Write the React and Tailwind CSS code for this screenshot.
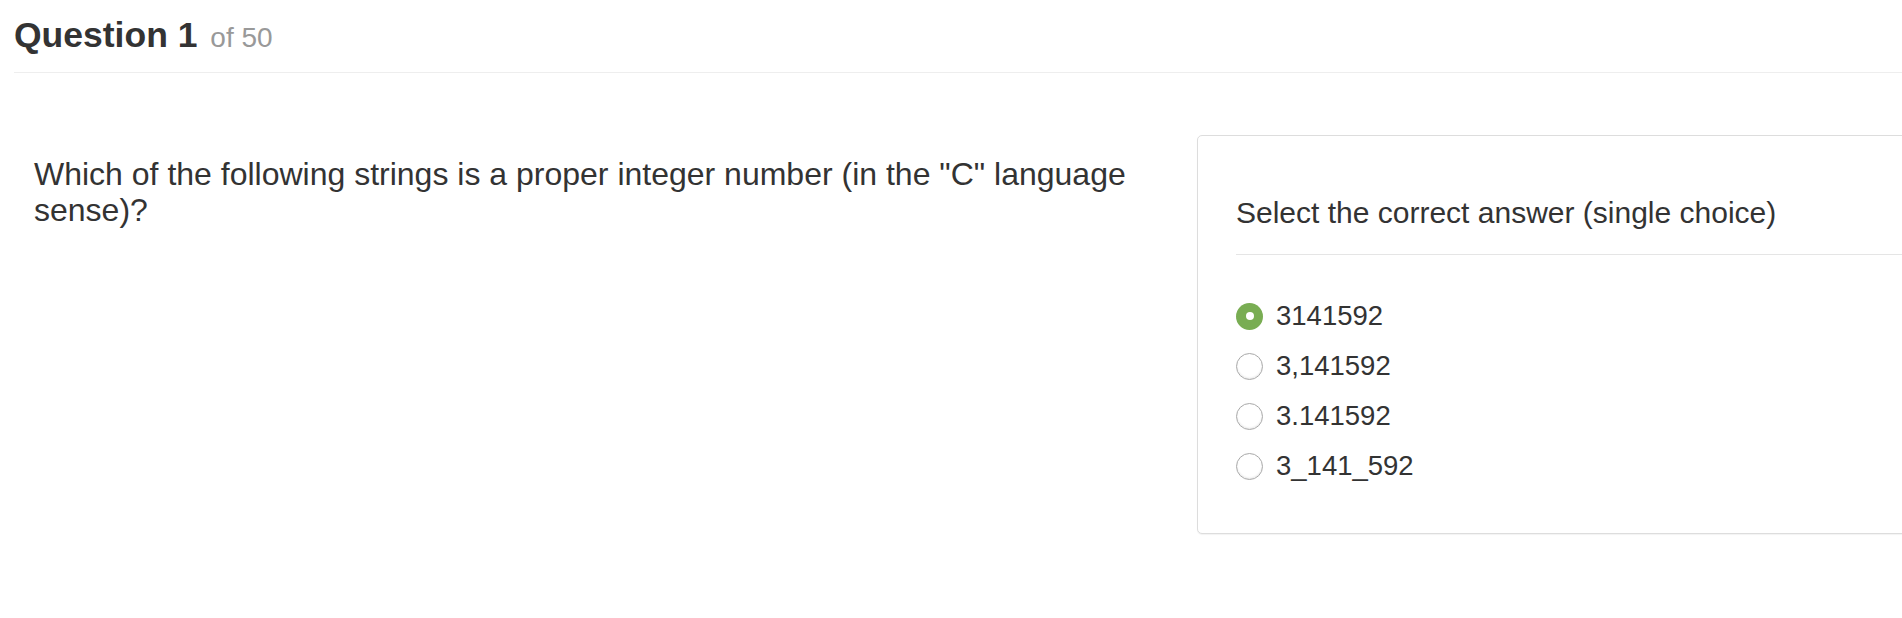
import React from 'react'

const options = [
  { label: '3141592', checked: true },
  { label: '3,141592', checked: false },
  { label: '3.141592', checked: false },
  { label: '3_141_592', checked: false },
]

function Radio({ checked }) {
  if (checked) {
    return (
      <span className="flex h-[27px] w-[27px] shrink-0 items-center justify-center rounded-full bg-[#79ad53]">
        <span className="h-[8px] w-[8px] rounded-full bg-white" />
      </span>
    )
  }
  return (
    <span className="h-[27px] w-[27px] shrink-0 rounded-full border border-[#a9a9a9] bg-white shadow-[inset_0_-1px_2px_rgba(0,0,0,0.1)]" />
  )
}

export default function App() {
  return (
    <div
      className="h-[618px] w-[1902px] overflow-hidden bg-white text-[#333]"
      style={{ fontFamily: '"Liberation Sans", Arial, sans-serif' }}
    >
      {/* Header */}
      <div className="ml-[14px] border-b border-[#eee] pt-[15px] pb-[17px]">
        <h1 className="text-[35.5px] font-bold leading-[40px]">
          Question 1{' '}
          <small className="ml-[3px] text-[28px] font-normal leading-none text-[#999]">of 50</small>
        </h1>
      </div>

      <div className="flex items-start">
        {/* Question */}
        <div className="ml-[14px] w-[1168px] shrink-0 pl-[20px] pt-[83px]">
          <p className="text-[32px] leading-[36px]">
            Which of the following strings is a proper integer number (in the "C" language sense)?
          </p>
        </div>

        {/* Answer panel */}
        <div className="ml-[15px] mt-[62px] h-[399px] w-[760px] shrink-0 rounded-[5px] border border-[#ddd] bg-white px-[38px] shadow-[0_1px_1px_rgba(0,0,0,0.05)]">
          <div className="border-b border-[#e5e5e5] pt-[60px] pb-[25px]">
            <h4 className="text-[30px] leading-[33px]">Select the correct answer (single choice)</h4>
          </div>
          <div className="pt-[36px]">
            {options.map((opt, i) => (
              <label key={i} className="flex h-[50px] items-center gap-[13px]">
                <Radio checked={opt.checked} />
                <span className="text-[27.5px] leading-[30px]">{opt.label}</span>
              </label>
            ))}
          </div>
        </div>
      </div>
    </div>
  )
}
